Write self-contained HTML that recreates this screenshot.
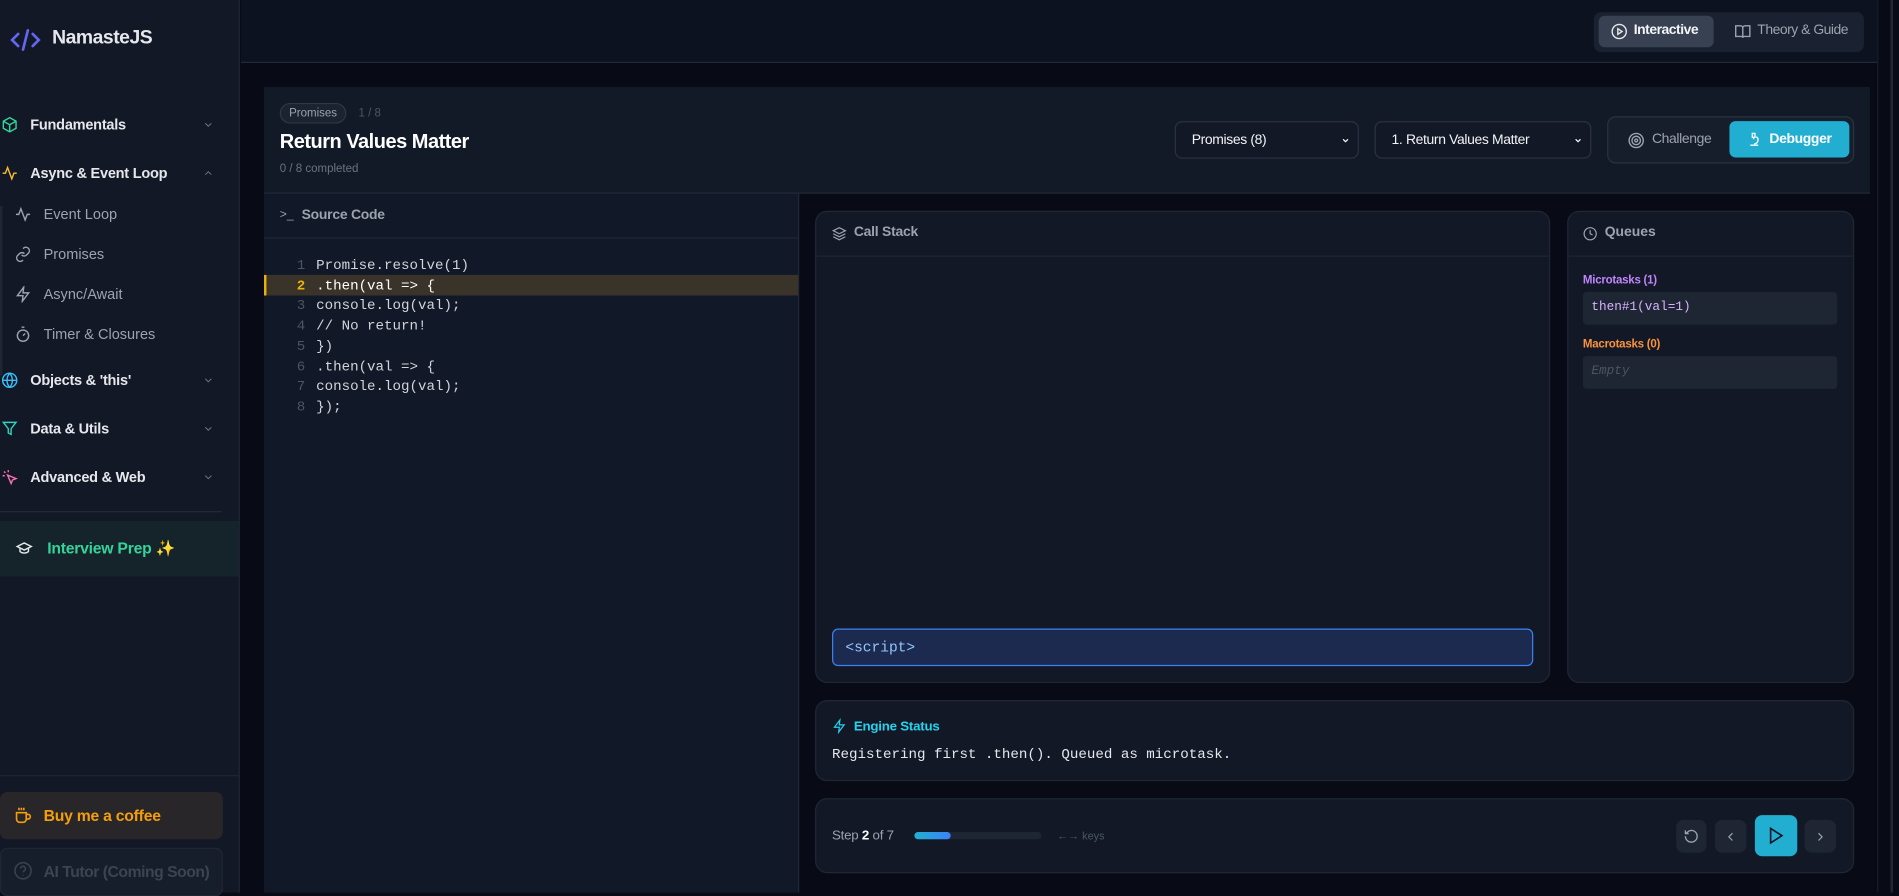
<!DOCTYPE html>
<html><head><meta charset="utf-8"><style>
*{box-sizing:border-box;margin:0;padding:0}
html,body{width:1899px;height:892px;overflow:hidden;background:#080b15}
#w{position:absolute;left:0;top:0;width:1568px;height:737px;transform:scale(1.21110);transform-origin:0 0;font-family:"Liberation Sans",sans-serif;color:#e5e7eb;background:#080b15}
.a{position:absolute}
.side{left:0;top:0;width:198px;height:737px;background:#121826;border-right:1px solid #1f2635}
.nav{left:0;width:198px;height:20px;font-size:12px;font-weight:bold;color:#e5e7eb;display:flex;align-items:center;letter-spacing:-0.2px}
.nav svg{margin-left:1px;margin-right:10px}
.chev{position:absolute;right:11px;top:5px}
.sub{left:12px;font-size:12px;color:#9ca3af;display:flex;align-items:center}
.sub svg{margin-right:10px}
.mono{font-family:"Liberation Mono",monospace}
.card{background:#121826;border:1px solid #1f2737;border-radius:10px}
.btn{background:#1e2533;border-radius:6px}
</style></head><body><div id="w">
<div class="a side">
 <div class="a" style="left:8px;top:24px"><svg width="26" height="18" viewBox="0 0 26 18" fill="none" stroke="#6366f1" stroke-width="2.2" stroke-linecap="round"><path d="M7 4L2 9l5 5M19 4l5 5-5 5M15 1l-4 16"/></svg></div>
 <div class="a" style="left:43px;top:23px;font-size:16px;font-weight:bold;color:#e5e7eb;letter-spacing:-0.4px">NamasteJS</div>
 <div class="a nav" style="top:93px"><svg width="14" height="14" viewBox="0 0 24 24" fill="none" stroke="#34d399" stroke-width="2"><path d="M12 2l9 5v10l-9 5-9-5V7z M3 7l9 5 9-5 M12 12v10"/></svg>Fundamentals<svg class="chev" width="10" height="10" viewBox="0 0 24 24" fill="none" stroke="#6b7280" stroke-width="2"><path d="M6 9l6 6 6-6"/></svg></div>
 <div class="a nav" style="top:133px"><svg width="14" height="14" viewBox="0 0 24 24" fill="none" stroke="#fbbf24" stroke-width="2"><path d="M2 12h4l3-8 6 16 3-8h4"/></svg>Async &amp; Event Loop<svg class="chev" width="10" height="10" viewBox="0 0 24 24" fill="none" stroke="#6b7280" stroke-width="2"><path d="M6 15l6-6 6 6"/></svg></div>
 <div class="a" style="left:0;top:170px;width:2px;height:140px;background:#1f2635"></div>
 <div class="a sub" style="top:170px"><svg width="14" height="14" viewBox="0 0 24 24" fill="none" stroke="#9ca3af" stroke-width="2"><path d="M2 12h4l3-8 6 16 3-8h4"/></svg><span>Event Loop</span></div>
 <div class="a sub" style="top:203px"><svg width="14" height="14" viewBox="0 0 24 24" fill="none" stroke="#9ca3af" stroke-width="2"><path d="M10 13a5 5 0 007 0l3-3a5 5 0 00-7-7l-1 1M14 11a5 5 0 00-7 0l-3 3a5 5 0 007 7l1-1"/></svg><span>Promises</span></div>
 <div class="a sub" style="top:236px"><svg width="14" height="14" viewBox="0 0 24 24" fill="none" stroke="#9ca3af" stroke-width="2"><path d="M13 2L4 14h8l-1 8 9-12h-8z"/></svg><span>Async/Await</span></div>
 <div class="a sub" style="top:269px"><svg width="14" height="14" viewBox="0 0 24 24" fill="none" stroke="#9ca3af" stroke-width="2"><circle cx="12" cy="14" r="8"/><path d="M10 2h4M12 14l3-3"/></svg><span>Timer &amp; Closures</span></div>
 <div class="a nav" style="top:304px"><svg width="14" height="14" viewBox="0 0 24 24" fill="none" stroke="#38bdf8" stroke-width="2"><circle cx="12" cy="12" r="10"/><path d="M2 12h20M12 2a15 15 0 010 20M12 2a15 15 0 000 20"/></svg>Objects &amp; 'this'<svg class="chev" width="10" height="10" viewBox="0 0 24 24" fill="none" stroke="#6b7280" stroke-width="2"><path d="M6 9l6 6 6-6"/></svg></div>
 <div class="a nav" style="top:344px"><svg width="14" height="14" viewBox="0 0 24 24" fill="none" stroke="#2dd4bf" stroke-width="2"><path d="M3 3h18l-7 9v8l-4-2v-6z"/></svg>Data &amp; Utils<svg class="chev" width="10" height="10" viewBox="0 0 24 24" fill="none" stroke="#6b7280" stroke-width="2"><path d="M6 9l6 6 6-6"/></svg></div>
 <div class="a nav" style="top:384px"><svg width="14" height="14" viewBox="0 0 24 24" fill="none" stroke="#f472b6" stroke-width="2"><path d="M9 9l5 12 2-5 5-2z M4 4l2 2 M2 10h3 M10 2v3"/></svg>Advanced &amp; Web<svg class="chev" width="10" height="10" viewBox="0 0 24 24" fill="none" stroke="#6b7280" stroke-width="2"><path d="M6 9l6 6 6-6"/></svg></div>
 <div class="a" style="left:0;top:422px;width:183px;height:1px;background:#242b3a"></div>
 <div class="a" style="left:0;top:430px;width:197px;height:46px;background:#14242a"></div>
 <div class="a" style="left:12px;top:446px"><svg width="16" height="14" viewBox="0 0 24 24" fill="none" stroke="#e5e7eb" stroke-width="2"><path d="M2 9l10-5 10 5-10 5z M6 11v5c3 3 9 3 12 0v-5"/></svg></div>
 <div class="a" style="left:39px;top:445px;font-size:13px;font-weight:bold;color:#34d399;letter-spacing:-0.2px">Interview Prep <span style="color:#fbbf24">✨</span></div>
 <div class="a" style="left:0;top:640px;width:197px;height:1px;background:#1f2635"></div>
 <div class="a" style="left:0;top:654px;width:184px;height:39px;background:#282628;border-radius:6px"></div>
 <div class="a" style="left:11px;top:665px"><svg width="16" height="16" viewBox="0 0 24 24" fill="none" stroke="#f59e0b" stroke-width="2"><path d="M4 9h12v8a4 4 0 01-4 4H8a4 4 0 01-4-4z M16 11h2a3 3 0 010 6h-2 M7 3v3M10 3v3M13 3v3"/></svg></div>
 <div class="a" style="left:36px;top:666px;font-size:13px;font-weight:bold;color:#f59e0b;letter-spacing:-0.2px">Buy me a coffee</div>
 <div class="a" style="left:0;top:700px;width:184px;height:40px;background:#171e2b;border:1px solid #1f2635;border-radius:6px"></div>
 <div class="a" style="left:11px;top:711px"><svg width="16" height="16" viewBox="0 0 24 24" fill="none" stroke="#374151" stroke-width="2"><circle cx="12" cy="12" r="10"/><path d="M9 9a3 3 0 016 1c0 2-3 2-3 4M12 17v1"/></svg></div>
 <div class="a" style="left:36px;top:712px;font-size:13px;color:#3b4453;font-weight:bold;letter-spacing:-0.4px">AI Tutor (Coming Soon)</div>
</div>
<div class="a" style="left:199px;top:0;width:1351px;height:52px;background:#0d1220;border-bottom:1px solid #222a38"></div>
<div class="a" style="left:1550px;top:0;width:18px;height:737px;background:#080b15;border-left:1px solid #1a1f2b"></div>
<div class="a" style="left:1561px;top:0;width:2px;height:737px;background:#222733"></div>
<div class="a" style="left:1316px;top:10px;width:223px;height:33px;background:#1a2130;border-radius:6px"></div>
<div class="a" style="left:1320px;top:13px;width:95px;height:26px;background:#374151;border-radius:5px"></div>
<div class="a" style="left:1330px;top:19px"><svg width="14" height="14" viewBox="0 0 24 24" fill="none" stroke="#e5e7eb" stroke-width="2"><circle cx="12" cy="12" r="10"/><path d="M10 8l6 4-6 4z"/></svg></div>
<div class="a" style="left:1349px;top:19px;font-size:11.5px;font-weight:bold;color:#f3f4f6;letter-spacing:-0.4px">Interactive</div>
<div class="a" style="left:1432px;top:19px"><svg width="14" height="14" viewBox="0 0 24 24" fill="none" stroke="#9ca3af" stroke-width="2"><path d="M2 4h7a3 3 0 013 3v14a2 2 0 00-2-2H2z M22 4h-7a3 3 0 00-3 3v14a2 2 0 012-2h8z"/></svg></div>
<div class="a" style="left:1451px;top:19px;font-size:11.5px;color:#9ca3af;letter-spacing:-0.4px">Theory &amp; Guide</div>
<div class="a" style="left:218px;top:72px;width:1326px;height:665px;background:#111827"></div>
<div class="a" style="left:218px;top:72px;width:1326px;height:88px;background:#131a27;border-bottom:1px solid #232b3a"></div>
<div class="a" style="left:231px;top:85px;width:55px;height:17px;border:1px solid #2e3748;background:#1b2230;border-radius:9px;font-size:9.5px;color:#9ca3af;text-align:center;line-height:15px">Promises</div>
<div class="a" style="left:296px;top:88px;font-size:9.5px;color:#4b5563">1 / 8</div>
<div class="a" style="left:231px;top:108px;font-size:16.5px;font-weight:bold;color:#fff;letter-spacing:-0.4px">Return Values Matter</div>
<div class="a" style="left:231px;top:134px;font-size:9.5px;color:#6b7280">0 / 8 completed</div>
<div class="a" style="left:970px;top:100px;width:152px;height:31px;background:#121826;border:1px solid #2a3242;border-radius:6px;font-size:11.5px;color:#f3f4f6;padding:9px 0 0 13px;letter-spacing:-0.3px">Promises (8)<svg style="position:absolute;right:6px;top:11px" width="8" height="8" viewBox="0 0 24 24" fill="none" stroke="#fff" stroke-width="3"><path d="M6 9l6 6 6-6"/></svg></div>
<div class="a" style="left:1135px;top:100px;width:179px;height:31px;background:#121826;border:1px solid #2a3242;border-radius:6px;font-size:11.5px;color:#f3f4f6;padding:9px 0 0 13px;letter-spacing:-0.3px">1. Return Values Matter<svg style="position:absolute;right:6px;top:11px" width="8" height="8" viewBox="0 0 24 24" fill="none" stroke="#fff" stroke-width="3"><path d="M6 9l6 6 6-6"/></svg></div>
<div class="a" style="left:1327px;top:96px;width:204px;height:39px;background:#171e2b;border:1px solid #2a3242;border-radius:7px"></div>
<div class="a" style="left:1344px;top:109px"><svg width="14" height="14" viewBox="0 0 24 24" fill="none" stroke="#9ca3af" stroke-width="2"><circle cx="12" cy="12" r="10"/><circle cx="12" cy="12" r="6"/><circle cx="12" cy="12" r="2"/></svg></div>
<div class="a" style="left:1364px;top:109px;font-size:11.5px;color:#9ca3af;letter-spacing:-0.3px">Challenge</div>
<div class="a" style="left:1428px;top:100px;width:99px;height:30px;background:#22aed1;border-radius:5px"></div>
<div class="a" style="left:1442px;top:108px"><svg width="13" height="14" viewBox="0 0 24 24" fill="none" stroke="#fff" stroke-width="2"><path d="M6 21h12M9 3h4v6H9z M11 9v3M15 8a6 6 0 01-3 11"/></svg></div>
<div class="a" style="left:1461px;top:109px;font-size:11.5px;font-weight:bold;color:#fff;letter-spacing:-0.3px">Debugger</div>
<div class="a" style="left:218px;top:160px;width:442px;height:577px;background:#111827;border-right:1px solid #232b3a"></div>
<div class="a" style="left:218px;top:196px;width:441px;height:1px;background:#1f2737"></div>
<div class="a" style="left:231px;top:172px;font-size:10px;color:#9ca3af" >&gt;_</div>
<div class="a" style="left:249px;top:172px;font-size:11.5px;color:#9ca3af;font-weight:bold;letter-spacing:-0.2px">Source Code</div>
<div class="a" style="left:218px;top:227px;width:441px;height:17px;background:#3a3329;border-left:2px solid #eab308"></div>
<div class="a mono" style="left:226px;top:211px;font-size:11.7px;line-height:16.7px;color:#4b5563;width:26px;text-align:right">1<br><b style="color:#eab308">2</b><br>3<br>4<br>5<br>6<br>7<br>8</div>
<div class="a mono" style="left:261px;top:211px;font-size:11.7px;line-height:16.7px;color:#d1d5db;white-space:pre">Promise.resolve(1)
<b style="color:#fff;font-weight:normal">.then(val =&gt; {</b>
console.log(val);
// No return!
})
.then(val =&gt; {
console.log(val);
});</div>
<div class="a" style="left:660px;top:160px;width:884px;height:577px;background:#080b15"></div>
<div class="a card" style="left:673px;top:174px;width:607px;height:390px"></div>
<div class="a" style="left:674px;top:211px;width:605px;height:1px;background:#1f2737"></div>
<div class="a" style="left:687px;top:186px"><svg width="12" height="12" viewBox="0 0 24 24" fill="none" stroke="#9ca3af" stroke-width="2"><path d="M12 2l10 5-10 5L2 7z M2 12l10 5 10-5 M2 17l10 5 10-5"/></svg></div>
<div class="a" style="left:705px;top:186px;font-size:11.5px;color:#9ca3af;font-weight:bold;letter-spacing:-0.2px">Call Stack</div>
<div class="a mono" style="left:687px;top:519px;width:579px;height:31px;background:#1b2a4e;border:1px solid #3b82f6;border-radius:5px;font-size:12px;color:#93c5fd;padding:8px 0 0 10px">&lt;script&gt;</div>
<div class="a card" style="left:1294px;top:174px;width:237px;height:390px"></div>
<div class="a" style="left:1295px;top:211px;width:235px;height:1px;background:#1f2737"></div>
<div class="a" style="left:1307px;top:186px"><svg width="12" height="12" viewBox="0 0 24 24" fill="none" stroke="#9ca3af" stroke-width="2"><circle cx="12" cy="12" r="10"/><path d="M12 6v6l4 2"/></svg></div>
<div class="a" style="left:1325px;top:186px;font-size:11.5px;color:#9ca3af;font-weight:bold">Queues</div>
<div class="a" style="left:1307px;top:226px;font-size:9.5px;font-weight:bold;color:#c084fc;letter-spacing:-0.2px">Microtasks (1)</div>
<div class="a mono" style="left:1307px;top:241px;width:210px;height:27px;background:#1e2533;border-radius:3px;font-size:10.5px;color:#d8b4fe;padding:7px 0 0 7px">then#1(val=1)</div>
<div class="a" style="left:1307px;top:279px;font-size:9.5px;font-weight:bold;color:#fb923c;letter-spacing:-0.2px">Macrotasks (0)</div>
<div class="a mono" style="left:1307px;top:294px;width:210px;height:27px;background:#1e2533;border-radius:3px;font-size:10.5px;color:#4b5563;font-style:italic;padding:7px 0 0 7px">Empty</div>
<div class="a card" style="left:673px;top:578px;width:858px;height:67px"></div>
<div class="a" style="left:687px;top:593px"><svg width="12" height="13" viewBox="0 0 24 24" fill="none" stroke="#22d3ee" stroke-width="2"><path d="M13 2L4 14h8l-1 8 9-12h-8z"/></svg></div>
<div class="a" style="left:705px;top:594px;font-size:11px;font-weight:bold;color:#22d3ee;letter-spacing:-0.2px">Engine Status</div>
<div class="a mono" style="left:687px;top:616px;font-size:11.7px;color:#e5e7eb">Registering first .then(). Queued as microtask.</div>
<div class="a card" style="left:673px;top:659px;width:858px;height:62px"></div>
<div class="a" style="left:687px;top:684px;font-size:11px;color:#9ca3af;letter-spacing:-0.2px">Step <b style="color:#fff">2</b> of 7</div>
<div class="a" style="left:755px;top:687px;width:105px;height:6px;background:#1e2533;border-radius:3px"></div>
<div class="a" style="left:755px;top:687px;width:30px;height:6px;background:linear-gradient(90deg,#22aed1,#3b82f6);border-radius:3px"></div>
<div class="a" style="left:873px;top:685px;font-size:9px;color:#4b5563">←→ keys</div>
<div class="a btn" style="left:1384px;top:677px;width:25px;height:27px"></div>
<div class="a" style="left:1390px;top:684px"><svg width="13" height="13" viewBox="0 0 24 24" fill="none" stroke="#9ca3af" stroke-width="2"><path d="M3 12a9 9 0 109-9 9 9 0 00-6 3L3 8 M3 3v5h5"/></svg></div>
<div class="a btn" style="left:1416px;top:677px;width:26px;height:27px"></div>
<div class="a" style="left:1423px;top:684px"><svg width="12" height="12" viewBox="0 0 24 24" fill="none" stroke="#9ca3af" stroke-width="2"><path d="M15 18l-6-6 6-6"/></svg></div>
<div class="a" style="left:1449px;top:673px;width:35px;height:34px;background:#22aed1;border-radius:6px"></div>
<div class="a" style="left:1458px;top:682px"><svg width="16" height="16" viewBox="0 0 24 24" fill="none" stroke="#0b1220" stroke-width="2"><path d="M6 3l14 9-14 9z"/></svg></div>
<div class="a btn" style="left:1490px;top:677px;width:26px;height:27px"></div>
<div class="a" style="left:1497px;top:684px"><svg width="12" height="12" viewBox="0 0 24 24" fill="none" stroke="#9ca3af" stroke-width="2"><path d="M9 18l6-6-6-6"/></svg></div>
</div></body></html>
